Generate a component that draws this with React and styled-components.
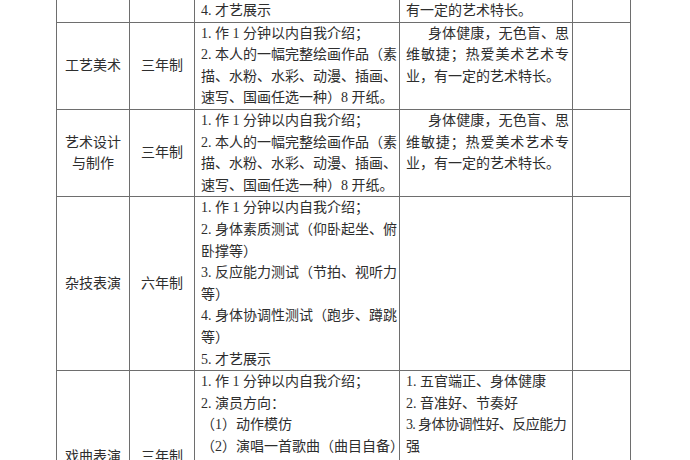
import React from "react";
import styled, { createGlobalStyle } from "styled-components";

const LINE = 21.6;

const GlobalStyle = createGlobalStyle`
  body {
    margin: 0;
    background: #ffffff;
  }
`;

const Page = styled.main`
  padding-left: 56px;
  overflow: hidden;
  height: 460px;
`;

const Sheet = styled.table`
  border-collapse: collapse;
  table-layout: fixed;
  width: 574px;
  font-family: "Liberation Serif", "Noto Sans CJK SC", serif;
  font-size: 14px;
  line-height: ${LINE}px;
  color: #2e2e2e;
`;

const Row = styled.tr`
  height: ${(p) => (p.$lines ? `${p.$lines * LINE}px` : "auto")};
`;

const Cell = styled.td`
  border: 1px solid #6e6e6e;
  border-top: ${(p) => (p.$open ? "none" : "1px solid #6e6e6e")};
  padding: ${(p) => (p.$center ? "0 7px" : "0 3px 0 6px")};
  vertical-align: ${(p) => (p.$center ? "middle" : "top")};
  text-align: ${(p) => (p.$center ? "center" : "left")};
`;

const Line = styled.span`
  display: block;
  white-space: nowrap;
  text-align: ${(p) => (p.$fill ? "justify" : "left")};
  text-align-last: ${(p) => (p.$fill ? "justify" : "auto")};
  text-indent: ${(p) => (p.$indent ? "22px" : "0")};
  letter-spacing: ${(p) => (p.$tight ? "-0.7px" : "normal")};
  padding-right: ${(p) => (p.$tight ? "3px" : "0")};
`;

const Lines = ({ items }) =>
  items.map(([text, fill, indent, tight], i) => (
    <Line key={i} $fill={fill} $indent={indent} $tight={tight}>
      {text}
    </Line>
  ));

const paintingTest = [
  ["1. 作 1 分钟以内自我介绍；"],
  ["2. 本人的一幅完整绘画作品（素", true],
  ["描、水粉、水彩、动漫、插画、", true],
  ["速写、国画任选一种）8 开纸。"],
];

const artRequire = [
  ["身体健康，无色盲、思", true, true],
  ["维敏捷；热爱美术艺术专", true],
  ["业，有一定的艺术特长。"],
];

const acrobatTest = [
  ["1. 作 1 分钟以内自我介绍；"],
  ["2. 身体素质测试（仰卧起坐、俯", true],
  ["卧撑等）"],
  ["3. 反应能力测试（节拍、视听力", true],
  ["等）"],
  ["4. 身体协调性测试（跑步、蹲跳", true],
  ["等）"],
  ["5. 才艺展示"],
];

const operaTest = [
  ["1. 作 1 分钟以内自我介绍；"],
  ["2. 演员方向："],
  ["（1）动作模仿"],
  ["（2）演唱一首歌曲（曲目自备）"],
];

const operaRequire = [
  ["1. 五官端正、身体健康"],
  ["2. 音准好、节奏好"],
  ["3. 身体协调性好、反应能力", true, false, true],
  ["强"],
];

export default function App() {
  return (
    <>
      <GlobalStyle />
      <Page>
        <Sheet>
          <colgroup>
            <col style={{ width: 73 }} />
            <col style={{ width: 65 }} />
            <col style={{ width: 205 }} />
            <col style={{ width: 173 }} />
            <col style={{ width: 58 }} />
          </colgroup>
          <tbody>
            <Row>
              <Cell $open $center />
              <Cell $open $center />
              <Cell $open>
                <Line>4. 才艺展示</Line>
              </Cell>
              <Cell $open>
                <Line>有一定的艺术特长。</Line>
              </Cell>
              <Cell $open />
            </Row>
            <Row $lines={4}>
              <Cell $center>工艺美术</Cell>
              <Cell $center>三年制</Cell>
              <Cell>
                <Lines items={paintingTest} />
              </Cell>
              <Cell>
                <Lines items={artRequire} />
              </Cell>
              <Cell />
            </Row>
            <Row $lines={4}>
              <Cell $center>艺术设计与制作</Cell>
              <Cell $center>三年制</Cell>
              <Cell>
                <Lines items={paintingTest} />
              </Cell>
              <Cell>
                <Lines items={artRequire} />
              </Cell>
              <Cell />
            </Row>
            <Row $lines={8}>
              <Cell $center>杂技表演</Cell>
              <Cell $center>六年制</Cell>
              <Cell>
                <Lines items={acrobatTest} />
              </Cell>
              <Cell />
              <Cell />
            </Row>
            <Row $lines={8}>
              <Cell $center>戏曲表演</Cell>
              <Cell $center>三年制</Cell>
              <Cell>
                <Lines items={operaTest} />
              </Cell>
              <Cell>
                <Lines items={operaRequire} />
              </Cell>
              <Cell />
            </Row>
          </tbody>
        </Sheet>
      </Page>
    </>
  );
}
